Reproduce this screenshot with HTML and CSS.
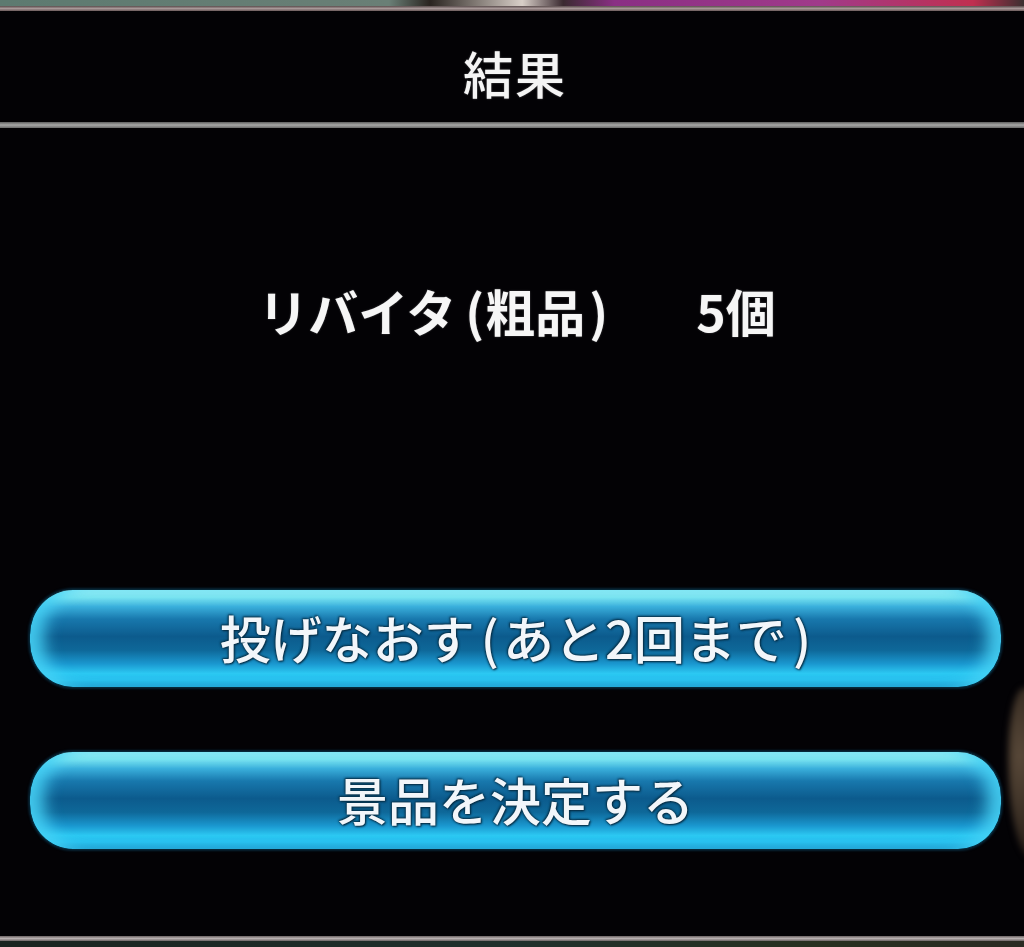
FILE: index.html
```html
<!DOCTYPE html>
<html lang="ja">
<head>
<meta charset="utf-8">
<title>結果</title>
<link rel="stylesheet" href="styles.css">
</head>
<body>
<div class="screen">
  <div class="scene-strip"></div>
  <div class="rule"></div>
  <header class="panel-header">
    <h1 class="panel-title">結果</h1>
  </header>
  <div class="divider"></div>
  <main class="panel-body">
    <div class="result-row">
      <span class="result-name">リバイタ<span class="po">(</span>粗品<span class="pc">)</span></span>
      <span class="result-count">5個</span>
    </div>
    <div class="actions">
      <button class="glass-btn" type="button">投げなおす<span class="po">(</span>あと2回まで<span class="pc">)</span></button>
      <button class="glass-btn" type="button">景品を決定する</button>
    </div>
    <div class="peek"></div>
  </main>
  <div class="rule bottom"></div>
  <div class="scene-strip lower"></div>
</div>
</body>
</html>
```

FILE: styles.css
```css
html, body {
  margin: 0;
  padding: 0;
  background: #030205;
}

.screen {
  width: 1024px;
  height: 947px;
  display: flex;
  flex-direction: column;
  overflow: hidden;
  background: #030205;
  font-family: "Noto Sans CJK JP", "Noto Sans", sans-serif;
  color: #fff;
}

/* game scene showing behind the panel */
.scene-strip {
  height: 6px;
  background: linear-gradient(90deg, #5d7a70 0%, #6a7f76 38%, #2a2420 42%, #d8cfc8 51%, #3a2a30 55%, #8a2f84 60%, #a03a8a 80%, #c03050 95%, #3b3030 100%);
  filter: blur(0.6px);
}

.scene-strip.lower {
  height: 6px;
  background: linear-gradient(90deg, #1a2420 0%, #20302c 50%, #283020 80%, #2a2a22 100%);
}

.rule {
  height: 5px;
  background: linear-gradient(180deg, #5a4c4c 0%, #a89898 50%, #6a5a5a 100%);
}

.rule.bottom {
  height: 5px;
  background: linear-gradient(180deg, #6c6464 0%, #b8b0b0 50%, #6c6464 100%);
}

.panel-header {
  height: 111px;
  display: flex;
  align-items: center;
  justify-content: center;
}

.panel-title {
  margin: 0;
  padding: 10px 0 0 6px;
  font-size: 50px;
  font-weight: 500;
  line-height: 1;
  letter-spacing: 2px;
  color: #f4f4f4;
  text-shadow: 0 0 2px rgba(255, 255, 255, 0.35);
}

.divider {
  height: 6px;
  background: linear-gradient(180deg, #5e5e5e 0%, #a8a8a8 50%, #6a6a6a 100%);
}

.panel-body {
  flex: 1;
  position: relative;
  display: flex;
  flex-direction: column;
}

/* half-width brackets, spaced a little wider than the font's default */
.po {
  margin: 0 1px 0 9px;
}

.pc {
  margin-left: 4px;
}

.result-row {
  margin-top: 150px;
  height: 64px;
  display: flex;
  align-items: center;
  justify-content: center;
  gap: 88px;
  padding-left: 10px;
  font-size: 50px;
  font-weight: 700;
  line-height: 64px;
  color: #f6f6f6;
  text-shadow: 0 0 2px rgba(255, 255, 255, 0.3);
}

.actions {
  margin-top: 247px;
  padding: 0 22px 0 29px;
  display: flex;
  flex-direction: column;
  gap: 63px;
}

.glass-btn {
  height: 99px;
  border: 1px solid #062838;
  border-radius: 44px / 46px;
  font-family: inherit;
  font-size: 51px;
  font-weight: 500;
  color: #f2f6fa;
  letter-spacing: 0;
  text-shadow: 0 0 3px #06314a, 1px 1px 2px #062a40, -1px -1px 2px #0a3a55;
  background:
    linear-gradient(180deg,
      #a2f2f4 0%,
      #7ae4f0 8%,
      #3ab0dc 17%,
      #1878ad 30%,
      #0c5b8d 48%,
      #0e6899 62%,
      #1a97cf 76%,
      #2cc8f2 86%,
      #27c0ee 93%,
      #1594c8 100%);
  box-shadow:
    inset 20px 0 16px -6px rgba(70, 210, 245, 0.9),
    inset -20px 0 16px -6px rgba(70, 210, 245, 0.9),
    0 0 3px rgba(20, 120, 170, 0.6);
  filter: blur(0.4px);
  padding: 0 0 4px 0;
}

.glass-btn .po {
  margin: 0 4px 0 6px;
}

.glass-btn .pc {
  margin-left: 6px;
}

/* sliver of a character standing just off the right edge */
.peek {
  position: absolute;
  right: -24px;
  top: 560px;
  width: 40px;
  height: 170px;
  border-radius: 40% 0 0 60%;
  background: radial-gradient(ellipse at 30% 40%, #5a4a3a 0%, #2e241c 60%, transparent 100%);
  filter: blur(3px);
}
```
